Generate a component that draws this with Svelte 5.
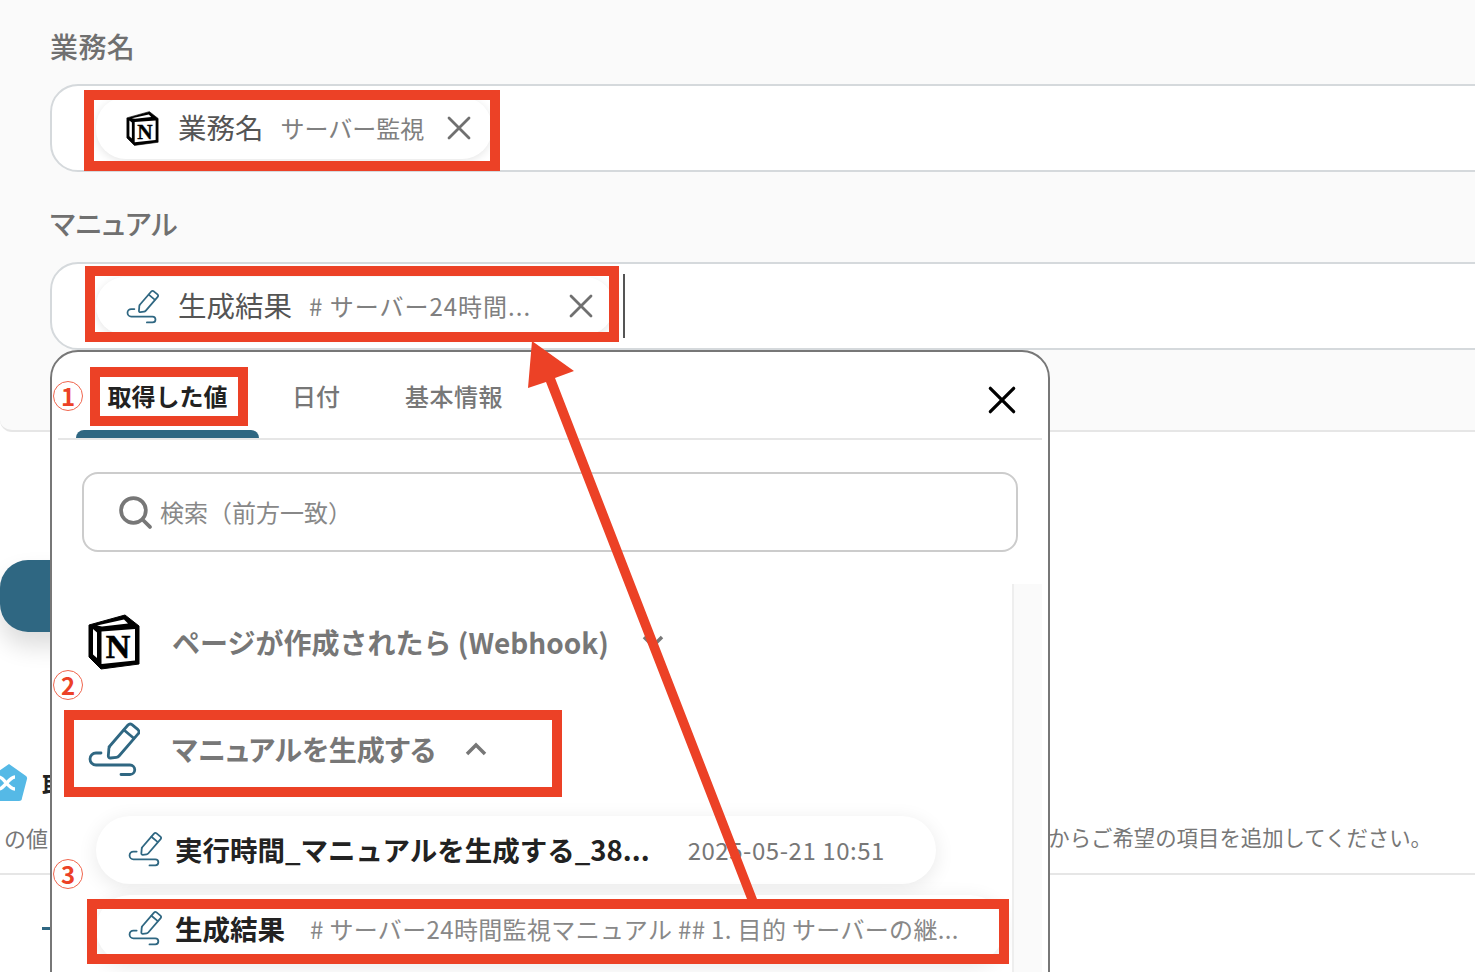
<script>
  const tabs = ['取得した値', '日付', '基本情報'];
  const marks = [
    { n: '1', y: 381 },
    { n: '2', y: 670 },
    { n: '3', y: 859 }
  ];
  // red annotation frames, outer box
  const frames = [
    { x: 84, y: 90, w: 416, h: 81 },
    { x: 85, y: 266, w: 534, h: 76 },
    { x: 90, y: 367, w: 158, h: 59 },
    { x: 64, y: 710, w: 498, h: 87 },
    { x: 87, y: 899, w: 922, h: 65 }
  ];
</script>

{#snippet notion(cls)}
  <svg class={cls} viewBox="0 0 52 56">
    <path d="M1 11 L37 1 L51 12 V50 L13 55 L1 43 Z" fill="#000" stroke="#000" stroke-width="1" stroke-linejoin="round" />
    <path d="M13.500 17.500 L47 15 V46.500 L13.500 50 Z" fill="#fff" />
    <path d="M9 11.500 L36 5.500 L40 9.500 L14 12.500 Z" fill="#fff" />
    <path d="M5 15 L9 18.500 V44 L5 40.500 Z" fill="#fff" />
    <text x="30" y="44" text-anchor="middle" class="notion-n">N</text>
  </svg>
{/snippet}

{#snippet pen(cls)}
  <svg class={cls} viewBox="0 0 52 56" fill="none" stroke="#2f6782" stroke-width="2.800" stroke-linecap="round" stroke-linejoin="round">
    <path d="M21 26 L40 4 a3 3 0 0 1 4 -.3 l6 5 a3 3 0 0 1 .3 4 L31 35 a4 4 0 0 1 -2.500 1.300 l-6 .7 a2 2 0 0 1 -2.200 -2.200 l.5 -6 a4 4 0 0 1 .7 -2.800 z" />
    <path d="M36 9 l9.500 8" />
    <path d="M13 32 H8 a5.500 5.500 0 0 0 0 12 H42 a4.500 4.500 0 0 1 0 9.500 H33" />
  </svg>
{/snippet}

{#snippet cross(cls)}
  <svg class={cls} viewBox="0 0 24 24" fill="none" stroke="currentColor" stroke-width="2.800" stroke-linecap="round">
    <path d="M2 2 L22 22 M22 2 L2 22" />
  </svg>
{/snippet}

<div class="page">
  <section class="form">
    <div class="label first">業務名</div>
    <div class="field">
      <div class="chip">
        {@render notion('chip-icon')}
        <span class="chip-name">業務名</span>
        <span class="chip-value">サーバー監視</span>
        {@render cross('chip-x')}
      </div>
    </div>
    <div class="label">マニュアル</div>
    <div class="field">
      <div class="chip wide">
        {@render pen('chip-icon')}
        <span class="chip-name">生成結果</span>
        <span class="chip-value spaced"># サーバー24時間...</span>
        {@render cross('chip-x')}
      </div>
      <span class="caret"></span>
    </div>
  </section>

  <div class="behind">
    <div class="teal-btn"></div>
    <div class="step-title">
      <svg class="hex" viewBox="0 0 38 40">
        <path d="M19 1 L36 13 a3 3 0 0 1 1 3 L32 35 a3 3 0 0 1 -3 3 H9 a3 3 0 0 1 -3 -3 L1 16 a3 3 0 0 1 1 -3 Z" fill="#55b9e6" />
        <path d="M9 14 C14 14 18 26 25 26 M9 26 C14 26 19 14 25 14" fill="none" stroke="#fff" stroke-width="3.500" />
      </svg>
      <span>取</span>
    </div>
    <div class="hint">
      <span>の値</span>
      <span class="hint-right">からご希望の項目を追加してください。</span>
    </div>
    <div class="dash"></div>
  </div>

  <div class="panel">
    <div class="tabs">
      {#each tabs as tab, i}
        <div class="tab" class:active={i === 0}>{tab}</div>
      {/each}
      {@render cross('panel-x')}
    </div>
    <div class="search">
      <svg class="search-icon" viewBox="0 0 32 32" fill="none" stroke="#777" stroke-width="3.600" stroke-linecap="round">
        <circle cx="14" cy="14" r="12" />
        <path d="M23 23 L30 30" />
      </svg>
      <span class="search-text">検索（前方一致）</span>
    </div>
    <div class="list">
      <div class="scroll"></div>
      <div class="group">
        {@render notion('group-icon')}
        <span class="group-name">ページが作成されたら (Webhook)</span>
        <svg class="chev down" viewBox="0 0 22 14" fill="none" stroke="#777" stroke-width="3.500"><path d="M2 2 L11 11 L20 2" /></svg>
      </div>
      <div class="group pen-row">
        {@render pen('group-icon')}
        <span class="group-name tight">マニュアルを生成する</span>
        <svg class="chev" viewBox="0 0 22 14" fill="none" stroke="#777" stroke-width="3.500"><path d="M2 12 L11 3 L20 12" /></svg>
      </div>
      <div class="item">
        {@render pen('item-icon')}
        <span class="item-name">実行時間_マニュアルを生成する_38...</span>
        <span class="item-date">2025-05-21 10:51</span>
      </div>
      <div class="item last">
        {@render pen('item-icon')}
        <span class="item-name">生成結果</span>
        <span class="item-desc"># サーバー24時間監視マニュアル ## 1. 目的 サーバーの継...</span>
      </div>
    </div>
  </div>

  {#each frames as f}
    <div class="frame" style="left:{f.x}px;top:{f.y}px;width:{f.w}px;height:{f.h}px"></div>
  {/each}

  {#each marks as m}
    <div class="mark" style="top:{m.y}px">{m.n}</div>
  {/each}

  <svg class="arrow" viewBox="0 0 1475 972">
    <path d="M532 341 L574 371 L555 378 L757 899 L747 899 L546 382 L528 388 Z" fill="#ec4126" />
  </svg>
</div>

<style>
  :global(body) {
    margin: 0;
    background: #fff;
  }

  .page {
    position: relative;
    width: 1475px;
    height: 972px;
    overflow: hidden;
    background: #fff;
    font-family: "Noto Sans CJK JP", "Noto Sans", sans-serif;
    color: #777;
  }

  .form {
    box-sizing: border-box;
    height: 432px;
    padding: 27px 0 0 50px;
    background: #fafafa;
    border-bottom: 2px solid #e6e6e6;
    border-radius: 0 0 0 12px;
  }

  .label {
    font-size: 28px;
    font-weight: 500;
    line-height: 38px;
    letter-spacing: 0.4px;
    color: #707070;
    font-feature-settings: "palt";
    margin: 32px 0 20px;
  }

  .label.first {
    margin: 0 0 19px;
  }

  .field {
    display: flex;
    align-items: center;
    box-sizing: border-box;
    height: 88px;
    width: 1500px;
    padding-left: 44px;
    background: #fff;
    border: 2px solid #d5d9dc;
    border-radius: 28px 0 0 28px;
  }

  .chip {
    display: flex;
    align-items: center;
    box-sizing: border-box;
    width: 396px;
    height: 62px;
    padding: 0 21px 0 30px;
    border-radius: 30px;
    background: #fff;
    box-shadow: 0 2px 8px rgba(0, 0, 0, 0.1);
  }

  .chip.wide {
    width: 518px;
    height: 58px;
  }

  .chip-icon {
    width: 33px;
    height: 35px;
    flex: none;
    margin-right: 19px;
  }

  .chip-name {
    font-size: 28.500px;
    line-height: 40px;
    margin-top: -2px;
    color: #555;
    white-space: nowrap;
  }

  .chip-value {
    margin: -2px 0 0 17px;
    font-size: 24px;
    color: #808080;
    white-space: nowrap;
    flex: 1;
  }

  .chip-value.spaced {
    letter-spacing: 1px;
  }

  .chip-x {
    width: 24px;
    height: 24px;
    flex: none;
    color: #707070;
  }

  .caret {
    width: 2px;
    height: 64px;
    margin-left: 9px;
    background: #555;
  }

  .behind {
    height: 540px;
    position: relative;
  }

  .teal-btn {
    width: 200px;
    height: 72px;
    margin-top: 128px;
    background: #2f6782;
    border-radius: 28px;
    box-shadow: 0 14px 24px rgba(0, 0, 0, 0.14);
  }

  .step-title {
    display: flex;
    align-items: center;
    gap: 14px;
    margin: 132px 0 0 -10px;
    height: 38px;
    font-size: 24px;
    font-weight: 700;
    color: #222;
  }

  .hex {
    width: 38px;
    height: 40px;
    flex: none;
  }

  .hint {
    display: flex;
    justify-content: space-between;
    box-sizing: border-box;
    height: 73px;
    padding: 18px 43px 0 4px;
    font-size: 22px;
    line-height: 34px;
    color: #777;
    border-bottom: 2px solid #e6e6e6;
  }

  .hint-right {
    font-size: 21.400px;
  }

  .dash {
    width: 60px;
    height: 3px;
    margin: 52px 0 0 42px;
    background: #2f6782;
  }

  .panel {
    position: absolute;
    left: 50px;
    top: 350px;
    box-sizing: border-box;
    width: 1000px;
    height: 660px;
    padding: 0 6px;
    background: #fff;
    border: 2px solid #777;
    border-radius: 28px 28px 0 0;
  }

  .tabs {
    position: relative;
    display: flex;
    height: 86px;
    padding-left: 18px;
    border-bottom: 2px solid #e6e6e6;
  }

  .tab {
    display: flex;
    align-items: center;
    justify-content: center;
    position: relative;
    box-sizing: border-box;
    padding: 0 32px;
    height: 86px;
    font-size: 24px;
    font-weight: 500;
    color: #777;
    white-space: nowrap;
  }

  .tab.active {
    width: 183px;
    padding: 0;
    font-weight: 700;
    color: #222;
  }

  .tab.active::after {
    content: '';
    position: absolute;
    left: 0;
    right: 0;
    bottom: 0;
    height: 8px;
    background: #2f6782;
    border-radius: 8px 8px 0 0;
  }

  .tab:nth-child(2) {
    padding: 0 33px;
  }

  .tab:nth-child(3) {
    letter-spacing: 0.5px;
  }

  :global(.panel-x) {
    position: absolute;
    right: 26px;
    top: 34px;
    width: 28px;
    height: 28px;
    color: #000;
  }

  .search {
    display: flex;
    align-items: center;
    gap: 8px;
    box-sizing: border-box;
    height: 80px;
    margin: 32px 24px 0;
    padding-left: 35px;
    border: 2px solid #ccc;
    border-radius: 16px;
    font-size: 24px;
    color: #888;
  }

  .search-text {
    margin-top: -2px;
  }

  .search-icon {
    width: 33px;
    height: 33px;
    flex: none;
  }

  .list {
    position: relative;
    height: 420px;
    margin-top: 32px;
    padding-top: 30px;
  }

  .scroll {
    position: absolute;
    right: 0;
    top: 0;
    bottom: 0;
    width: 28px;
    background: #fafafa;
    border-left: 2px solid #eee;
  }

  .group {
    display: flex;
    align-items: center;
    padding-left: 30px;
    height: 56px;
  }

  .pen-row {
    margin-top: 51px;
  }

  :global(.group-icon) {
    width: 52px;
    height: 56px;
    flex: none;
    margin-right: 32px;
  }

  .group-name {
    font-size: 28px;
    font-weight: 700;
    color: #777;
    white-space: nowrap;
  }

  .group-name.tight {
    font-feature-settings: "palt";
  }

  .chev {
    width: 22px;
    height: 14px;
    margin-left: 29px;
  }

  .chev.down {
    margin-left: 33px;
  }

  .item {
    display: flex;
    align-items: center;
    box-sizing: border-box;
    width: 840px;
    height: 68px;
    margin: 39px 0 0 38px;
    padding: 0 0 2px 32px;
    border-radius: 34px;
    background: #fff;
    box-shadow: 0 4px 20px rgba(0, 0, 0, 0.09);
  }

  .item.last {
    width: 908px;
    margin-top: 11px;
  }

  :global(.item-icon) {
    width: 34px;
    height: 36px;
    flex: none;
    margin-right: 13px;
  }

  .item-name {
    font-size: 27.500px;
    font-weight: 700;
    color: #222;
    white-space: nowrap;
  }

  .item-date {
    margin-left: 38px;
    font-size: 24px;
    letter-spacing: 0.55px;
    color: #777;
    white-space: nowrap;
  }

  .item-desc {
    margin-left: 25px;
    font-size: 24px;
    letter-spacing: 0.35px;
    color: #888;
    white-space: nowrap;
  }

  .frame {
    position: absolute;
    box-sizing: border-box;
    border: 10px solid #ec4126;
  }

  .mark {
    position: absolute;
    left: 53px;
    box-sizing: border-box;
    width: 30px;
    height: 30px;
    border: 1.500px solid #f0654d;
    border-radius: 50%;
    font-size: 24px;
    font-weight: 700;
    line-height: 27px;
    text-align: center;
    color: #ec4126;
    background: #fff;
  }

  .arrow {
    position: absolute;
    left: 0;
    top: 0;
    width: 1475px;
    height: 972px;
    pointer-events: none;
  }

  :global(.notion-n) {
    font-family: "Liberation Serif", serif;
    font-size: 34px;
    font-weight: 700;
    fill: #000;
    stroke: #000;
    stroke-width: 0.6px;
  }
</style>
